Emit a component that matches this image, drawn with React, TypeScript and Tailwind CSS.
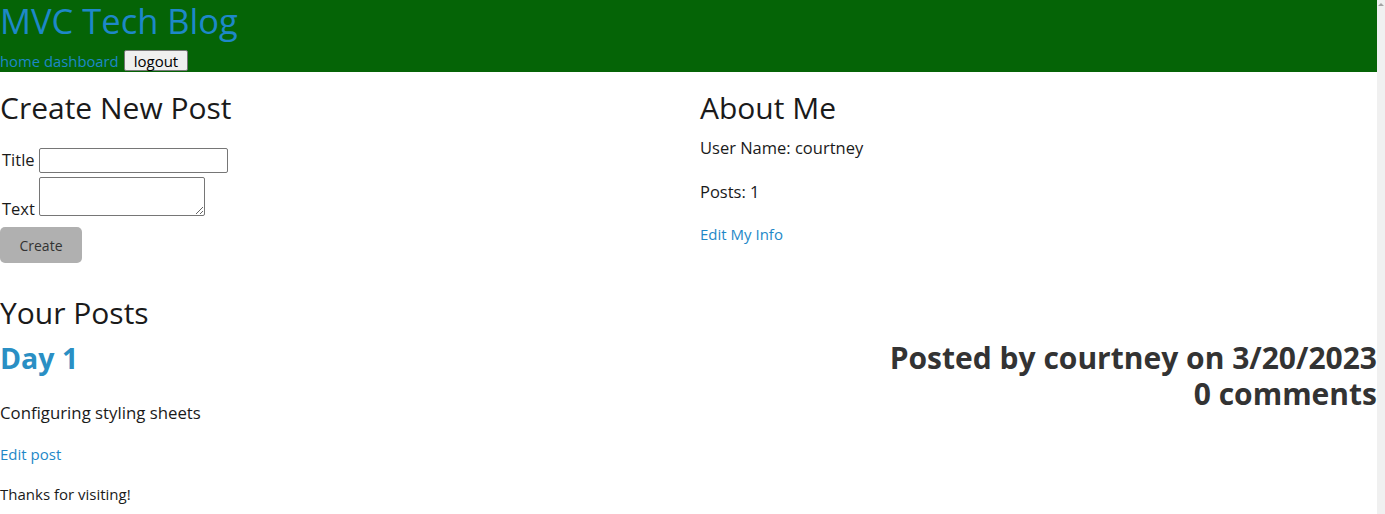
import React from "react";

const font = { fontFamily: '"Open Sans", "Noto Sans", sans-serif' };

const App = () => {
  return (
    <div className="flex h-[514px] w-[1385px] overflow-hidden bg-white text-[#1a1a1a]" style={font}>
      <div className="w-[1377px] flex flex-col">
        <header className="h-[72px] bg-[#056406] flex flex-col">
          <h1 className="text-[34.5px] leading-[42px] whitespace-nowrap text-[#1e88c8]">MVC Tech Blog</h1>
          <nav className="flex items-center gap-[4px] text-[14.8px] leading-[20px] text-[#1e88c8] mt-[8px]">
            <a>home</a>
            <a>dashboard</a>
            <button className="ml-[1px] h-[21px] px-[9px] border border-[#767676] rounded-[2px] bg-[#efefef] text-[15px] leading-[18px] text-black">
              logout
            </button>
          </nav>
        </header>

        <div className="grid grid-cols-[700px_1fr]">
          <section className="pt-[18px]">
            <h2 className="text-[30px] leading-[36px]">Create New Post</h2>
            <div className="mt-[22px] flex items-center gap-[4px] text-[16.5px] pl-[2px]">
              <span>Title</span>
              <input className="w-[189px] h-[25px] border border-[#767676] rounded-[2px]" />
            </div>
            <div className="mt-[4px] flex items-end gap-[4px] text-[16.5px] pl-[2px]">
              <span className="leading-[14px]">Text</span>
              <textarea className="w-[166px] h-[39px] border border-[#767676] rounded-[2px]" />
            </div>
            <button className="mt-[11px] w-[82px] h-[36px] rounded-[5px] bg-[#b0b0b0] text-[14px] text-[#333]">Create</button>
          </section>
          <section className="pt-[18px]">
            <h2 className="text-[30px] leading-[36px]">About Me</h2>
            <p className="mt-[10px] text-[16.5px] leading-[24px]">User Name: courtney</p>
            <p className="mt-[20px] text-[16.5px] leading-[24px]">Posts: 1</p>
            <a className="block mt-[19px] text-[15px] leading-[22px] text-[#1e88c8]">Edit My Info</a>
          </section>
        </div>

        <section className="mt-[32px]">
          <h2 className="text-[30px] leading-[36px]">Your Posts</h2>
          <div className="mt-[9px] flex justify-between">
            <a className="text-[28.5px] leading-[36px] font-bold text-[#2a8fc4]">Day 1</a>
            <div className="text-right text-[30px] leading-[36px] font-bold text-[#333]">
              <p>Posted by courtney on 3/20/2023</p>
              <p>0 comments</p>
            </div>
          </div>
          <p className="-mt-[11px] text-[16.8px] leading-[24px]">Configuring styling sheets</p>
          <a className="block mt-[18px] text-[15px] leading-[22px] text-[#1e88c8]">Edit post</a>
          <p className="mt-[19px] text-[15px] leading-[20px]">Thanks for visiting!</p>
        </section>
      </div>
      <div className="w-[8px] bg-[#f0f0f0] flex justify-center pt-[3px]">
        <div className="w-0 h-0 border-l-[3px] border-r-[3px] border-b-[3px] border-l-transparent border-r-transparent border-b-[#a3a3a3]" />
      </div>
    </div>
  );
};

export default App;
